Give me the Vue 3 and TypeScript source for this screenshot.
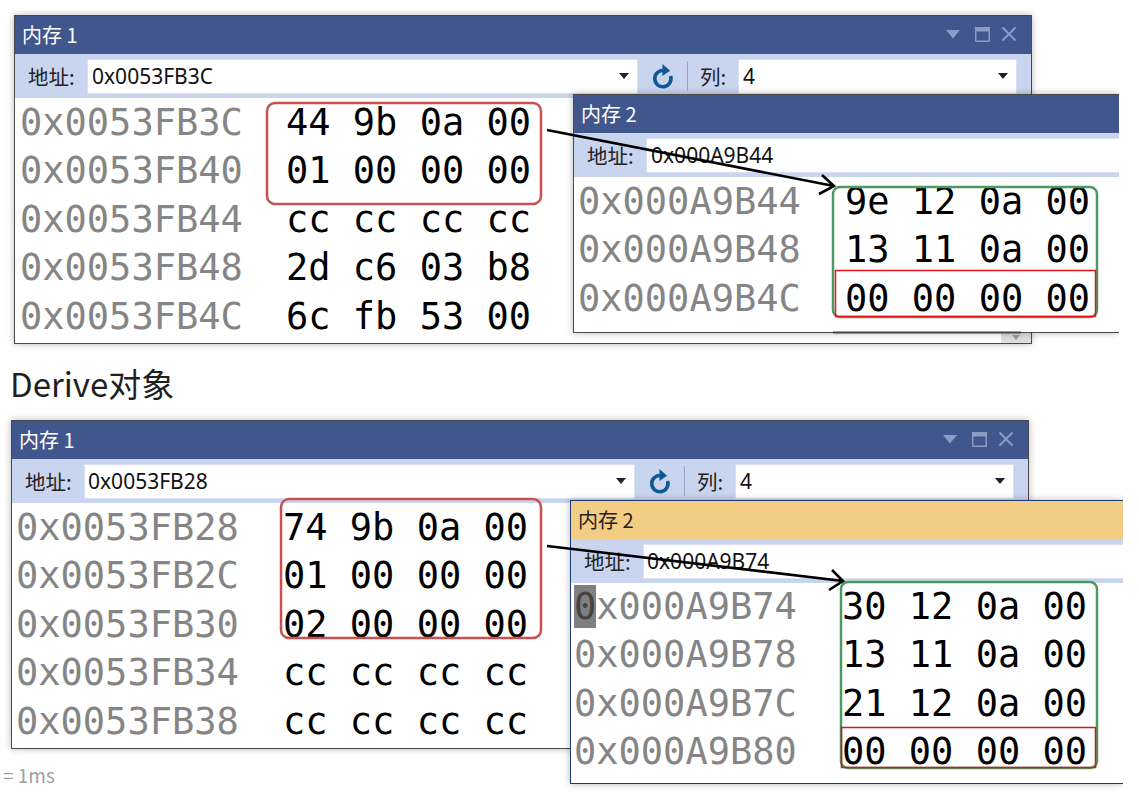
<script setup lang="ts">
interface Row { addr: string; bytes: string }
interface Win {
  id: string; title: string; addr: string; main: boolean; rows: Row[];
}
const windows: Win[] = [
  { id: 'w1', title: '内存 1', addr: '0x0053FB3C', main: true, rows: [
    { addr: '0x0053FB3C', bytes: '44 9b 0a 00' },
    { addr: '0x0053FB40', bytes: '01 00 00 00' },
    { addr: '0x0053FB44', bytes: 'cc cc cc cc' },
    { addr: '0x0053FB48', bytes: '2d c6 03 b8' },
    { addr: '0x0053FB4C', bytes: '6c fb 53 00' },
  ] },
  { id: 'w2', title: '内存 2', addr: '0x000A9B44', main: false, rows: [
    { addr: '0x000A9B44', bytes: '9e 12 0a 00' },
    { addr: '0x000A9B48', bytes: '13 11 0a 00' },
    { addr: '0x000A9B4C', bytes: '00 00 00 00' },
  ] },
  { id: 'w3', title: '内存 1', addr: '0x0053FB28', main: true, rows: [
    { addr: '0x0053FB28', bytes: '74 9b 0a 00' },
    { addr: '0x0053FB2C', bytes: '01 00 00 00' },
    { addr: '0x0053FB30', bytes: '02 00 00 00' },
    { addr: '0x0053FB34', bytes: 'cc cc cc cc' },
    { addr: '0x0053FB38', bytes: 'cc cc cc cc' },
  ] },
  { id: 'w4', title: '内存 2', addr: '0x000A9B74', main: false, rows: [
    { addr: '0x000A9B74', bytes: '30 12 0a 00' },
    { addr: '0x000A9B78', bytes: '13 11 0a 00' },
    { addr: '0x000A9B7C', bytes: '21 12 0a 00' },
    { addr: '0x000A9B80', bytes: '00 00 00 00' },
  ] },
];
</script>

<template>
  <div class="page">
    <div class="heading">Derive对象</div>
    <div class="note">= 1ms</div>

    <section v-for="w in windows" :key="w.id" class="win" :class="[w.id, w.main ? 'main' : 'sub']">
      <header class="title">
        <span class="title-text">{{ w.title }}</span>
        <span v-if="w.main" class="controls">
          <svg width="14" height="9" viewBox="0 0 14 9"><path d="M0 0h14L7 8.500z" fill="#8c9cc6" /></svg>
          <svg class="max" width="15" height="15" viewBox="0 0 15 15"><path d="M0 0h15v15H0zM1.500 4.500v9h12v-9z" fill="#8c9cc6" fill-rule="evenodd" /></svg>
          <svg width="16" height="16" viewBox="0 0 16 16"><path d="M1.500 1.500l13 13M14.500 1.500l-13 13" stroke="#8c9cc6" stroke-width="2" fill="none" /></svg>
        </span>
      </header>
      <div class="toolbar">
        <span class="label">地址:</span>
        <div class="input addr">
          <span>{{ w.addr }}</span>
          <svg v-if="w.main" class="caret" width="10" height="6" viewBox="0 0 10 6"><path d="M0 0h10L5 6z" fill="#222" /></svg>
        </div>
        <template v-if="w.main">
          <svg class="refresh" width="24" height="27" viewBox="0 0 26 30">
            <path d="M15.500 8.500a9 9 0 1 0 7 6" stroke="#0e5a96" stroke-width="4" fill="none" />
            <path d="M13.500 1l8.500 7.500-8.500 6z" fill="#0e5a96" />
          </svg>
          <span class="sep"></span>
          <span class="label col-label">列:</span>
          <div class="input col">
            <span>4</span>
            <svg class="caret" width="10" height="6" viewBox="0 0 10 6"><path d="M0 0h10L5 6z" fill="#222" /></svg>
          </div>
        </template>
      </div>
      <div class="body">
        <div v-for="(r, i) in w.rows" :key="r.addr" class="row">
          <span class="a"><span v-if="w.id === 'w4' && i === 0" class="cursor">0</span>{{ w.id === 'w4' && i === 0 ? r.addr.slice(1) : r.addr }}</span>
          <span class="b">{{ r.bytes }}</span>
        </div>
      </div>
      <div v-if="w.main" class="scroll-end">
        <svg width="8" height="5" viewBox="0 0 8 5"><path d="M0 0h8L4 5z" fill="#9a9a9a" /></svg>
      </div>
    </section>

    <svg class="marks" width="1139" height="809" viewBox="0 0 1139 809" fill="none">
      <path d="M833 332.500H1021" stroke="#444" stroke-width="2" />
      <rect x="267" y="103" width="274" height="101" rx="8" stroke="#c9504f" stroke-width="2.500" />
      <rect x="281" y="499" width="260" height="139" rx="8" stroke="#c9504f" stroke-width="2.500" />
      <rect x="833" y="187" width="264" height="130" rx="7" stroke="#4c9a62" stroke-width="2.500" />
      <rect x="841" y="582" width="256" height="186" rx="7" stroke="#4c9a62" stroke-width="2.500" />
      <rect x="835.500" y="270.500" width="260" height="46" stroke="#e8141c" stroke-width="1.500" />
      <rect x="841.500" y="727.500" width="254" height="40" stroke="#d8141c" stroke-width="1.500" />
      <path d="M547 130L834 186M822 175l12 11-15 8" stroke="#000" stroke-width="2.600" />
      <path d="M547 546L843 581M832 570l11 11-14 9" stroke="#000" stroke-width="2.600" />
    </svg>
  </div>
</template>

<style>
html, body { margin: 0; background: #fff; }
</style>

<style scoped>
.page {
  position: relative;
  width: 1139px;
  height: 809px;
  overflow: hidden;
  background: #fff;
  font-family: "Noto Sans CJK SC", "Noto Sans", sans-serif;
}
.heading {
  position: absolute;
  left: 10px;
  top: 360px;
  font-size: 33px;
  line-height: 46px;
  color: #1f1f1f;
}
.note {
  position: absolute;
  left: 3px;
  top: 765px;
  font-size: 19px;
  line-height: 20px;
  color: #9ca0a4;
}
.win {
  position: absolute;
  box-sizing: border-box;
  display: flex;
  flex-direction: column;
  border: 1px solid #4a4a4a;
  background: #fff;
  overflow: hidden;
  box-shadow: 0 0 7px rgba(0, 0, 0, 0.28);
}
.sub { border-right: none; clip-path: inset(-10px 0 -10px -10px); }
.w1 { left: 14px; top: 15px; width: 1018px; height: 329px; }
.w2 { left: 573px; top: 94px; width: 546px; height: 239px; }
.w3 { left: 11px; top: 420px; width: 1018px; height: 329px; }
.w4 { left: 570px; top: 500px; width: 553px; height: 284px; border-color: #1d3a78; }
.title {
  flex: none;
  height: 38px;
  box-sizing: border-box;
  display: flex;
  align-items: center;
  justify-content: space-between;
  padding: 0 14px 2px 7px;
  background: #41568c;
  color: #fff;
  font-size: 20px;
}
.w4 .title { background: #f4cd84; color: #222; }
.controls { display: flex; align-items: center; gap: 11px; }
.max { margin-left: 4px; }
.toolbar {
  flex: none;
  height: 44px;
  box-sizing: border-box;
  display: flex;
  align-items: center;
  padding: 0 14px 0 13px;
  background: #c9d4ee;
  color: #222;
  font-size: 20.500px;
}
.sub .toolbar { padding-right: 0; }
.label { flex: none; width: 59px; white-space: nowrap; }
.col-label { width: 38px; margin-left: 12px; }
.input {
  box-sizing: border-box;
  height: 35px;
  display: flex;
  align-items: center;
  justify-content: space-between;
  padding: 0 7px 0 4px;
  background: #fff;
  border: 1px solid #d9e0f2;
  color: #111;
  font-family: "Noto Sans", "Noto Sans CJK SC", sans-serif;
  font-size: 21px;
}
.addr { flex: 1; }
.sub .addr { border-right: none; }
.main .addr { flex: none; width: 551px; }
.w3 .addr, .w4 .addr { padding-left: 3px; }
.caret { flex: none; margin-right: 1px; }
.refresh { flex: none; margin: 0 0 0 12px; }
.sep { flex: none; width: 1px; height: 30px; margin-left: 13px; background: #95a3c4; }
.col { flex: 1; }
.body { flex: 1; }
.row {
  display: flex;
  height: 48.500px;
  align-items: center;
  padding-left: 5px;
  font-family: "DejaVu Sans Mono", "Liberation Mono", monospace;
  font-size: 37px;
  white-space: pre;
}
.w2 .row, .w3 .row { padding-left: 4px; }
.w4 .row { padding-left: 3px; }
.a { width: 266px; color: #858585; flex: none; }
.w2 .a, .w3 .a { width: 267px; }
.w4 .a { width: 268px; }
.b { color: #000; }
.w4 .body { margin-top: -1px; }
.cursor { background: #808080; color: #444; }
.scroll-end {
  position: absolute;
  right: 0;
  bottom: 0;
  width: 30px;
  height: 12px;
  display: flex;
  align-items: center;
  justify-content: center;
  background: #dcdcdc;
}
.marks { position: absolute; left: 0; top: 0; pointer-events: none; }
</style>
